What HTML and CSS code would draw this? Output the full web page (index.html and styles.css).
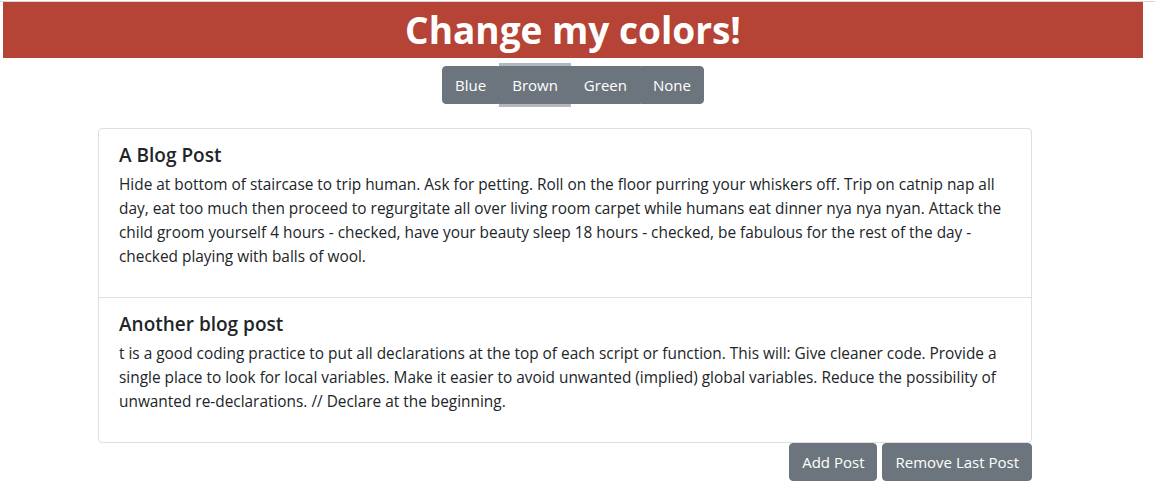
FILE: index.html
```html
<!DOCTYPE html>
<html lang="en">
<head>
<meta charset="utf-8">
<title>Change my colors!</title>
<link rel="stylesheet" href="styles.css">
</head>
<body>
<div class="topline"></div>
<header class="banner">
  <h1 class="banner-title">Change my colors!</h1>
</header>
<div class="switcher">
  <div class="btn-group">
    <button class="btn btn-group-item">Blue</button>
    <button class="btn btn-group-item is-focused">Brown</button>
    <button class="btn btn-group-item">Green</button>
    <button class="btn btn-group-item">None</button>
  </div>
</div>
<main class="posts">
  <div class="card">
    <section class="card-body">
      <h5 class="card-title">A Blog Post</h5>
      <p class="card-text">Hide at bottom of staircase to trip human. Ask for petting. Roll on the floor purring your whiskers off. Trip on catnip nap all day, eat too much then proceed to regurgitate all over living room carpet while humans eat dinner nya nya nyan. Attack the child groom yourself 4 hours - checked, have your beauty sleep 18 hours - checked, be fabulous for the rest of the day - checked playing with balls of wool.</p>
    </section>
    <section class="card-body">
      <h5 class="card-title">Another blog post</h5>
      <p class="card-text">t is a good coding practice to put all declarations at the top of each script or function. This will: Give cleaner code. Provide a single place to look for local variables. Make it easier to avoid unwanted (implied) global variables. Reduce the possibility of unwanted re-declarations. // Declare at the beginning.</p>
    </section>
  </div>
  <div class="actions">
    <button class="btn btn-add">Add Post</button>
    <button class="btn btn-remove">Remove Last Post</button>
  </div>
</main>
</body>
</html>
```
FILE: styles.css
```css
html, body {
  margin: 0;
  padding: 0;
  background: #fff;
}
body {
  font-family: "Open Sans", "Lato", sans-serif;
  color: #212529;
  font-size: 15.4px;
  line-height: 24px;
}
.topline {
  height: 1px;
  margin-top: 1px;
  background: #d6d6d6;
}
.banner {
  margin: 0 12px 0 3px;
  height: 56px;
  background: #b54436;
  display: flex;
  align-items: center;
  justify-content: center;
}
.banner-title {
  margin: 0;
  color: #fff;
  font-size: 37px;
  line-height: 48px;
  font-weight: 700;
}
.switcher {
  display: flex;
  justify-content: center;
  margin: 8px 12px 0 3px;
}
.btn {
  font-family: inherit;
  font-size: 15px;
  line-height: 24px;
  color: #fff;
  background: #6c757d;
  border: 1px solid #6c757d;
  border-radius: 4px;
  padding: 6px 12px;
  cursor: pointer;
}
.btn-group {
  display: flex;
}
.btn-group-item {
  border-radius: 0;
}
.btn-group-item:first-child {
  border-radius: 4px 0 0 4px;
}
.btn-group-item:last-child {
  border-radius: 0 4px 4px 0;
}
.btn-group-item.is-focused {
  box-shadow: 0 -3px 0 #b3b8bd, 0 3px 0 #b3b8bd;
}
.posts {
  width: 934px;
  margin: 24px 0 0 98px;
}
.card {
  border: 1px solid #dfdfdf;
  border-radius: 4px;
}
.card-body {
  padding: 14px 20px 28px;
}
.card-body + .card-body {
  border-top: 1px solid #dfdfdf;
}
.card-title {
  margin: 0 0 6px;
  font-size: 19px;
  line-height: 24px;
  font-weight: 600;
}
.card-text {
  margin: 0;
}
.actions {
  display: flex;
  justify-content: flex-end;
  gap: 5px;
}
```
